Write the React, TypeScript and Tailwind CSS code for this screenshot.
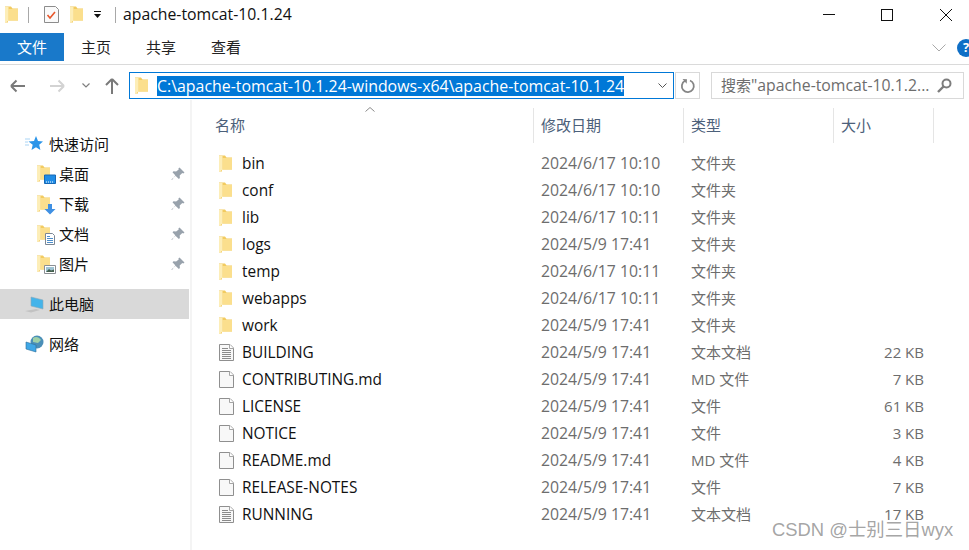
const font = { fontFamily: '"Open Sans", "Noto Sans CJK SC", sans-serif' };

type Item = { name: string; date: string; type: string; size?: string; icon: "folder" | "text" | "file" };

const items: Item[] = [
  { name: "bin", date: "2024/6/17 10:10", type: "文件夹", icon: "folder" },
  { name: "conf", date: "2024/6/17 10:10", type: "文件夹", icon: "folder" },
  { name: "lib", date: "2024/6/17 10:11", type: "文件夹", icon: "folder" },
  { name: "logs", date: "2024/5/9 17:41", type: "文件夹", icon: "folder" },
  { name: "temp", date: "2024/6/17 10:11", type: "文件夹", icon: "folder" },
  { name: "webapps", date: "2024/6/17 10:11", type: "文件夹", icon: "folder" },
  { name: "work", date: "2024/5/9 17:41", type: "文件夹", icon: "folder" },
  { name: "BUILDING", date: "2024/5/9 17:41", type: "文本文档", size: "22 KB", icon: "text" },
  { name: "CONTRIBUTING.md", date: "2024/5/9 17:41", type: "MD 文件", size: "7 KB", icon: "file" },
  { name: "LICENSE", date: "2024/5/9 17:41", type: "文件", size: "61 KB", icon: "file" },
  { name: "NOTICE", date: "2024/5/9 17:41", type: "文件", size: "3 KB", icon: "file" },
  { name: "README.md", date: "2024/5/9 17:41", type: "MD 文件", size: "4 KB", icon: "file" },
  { name: "RELEASE-NOTES", date: "2024/5/9 17:41", type: "文件", size: "7 KB", icon: "file" },
  { name: "RUNNING", date: "2024/5/9 17:41", type: "文本文档", size: "17 KB", icon: "text" },
];

function Folder({ className = "" }: { className?: string }) {
  return (
    <svg viewBox="0 0 13 17" className={`h-[17px] w-[13px] shrink-0 ${className}`}>
      <path d="M0 0.5h6l1.5 2H13v12H3v2H0z" fill="#f2cb60" />
      <path d="M3.5 3H13v11.5H3.5z" fill="#fbdf8d" />
      <path d="M0 1h3.5v13.5L1 16.5H0z" fill="#fdeeb8" />
    </svg>
  );
}

function FileIcon({ lines }: { lines?: boolean }) {
  return (
    <svg viewBox="0 0 15 17" className="h-[17px] w-[15px] shrink-0">
      <path d="M0.5 0.5h10.5l3.5 3.5v12.5h-14z" fill="#f8f8f8" stroke="#8f8f8f" />
      <path d="M10.5 0.5v4h4" fill="#fff" stroke="#a5a5a5" />
      {lines && <path d="M3 4.5h6M3 6.5h9M3 8.5h9M3 10.5h9M3 12.5h9M3 14.5h9" stroke="#8a8a8a" />}
    </svg>
  );
}

function Pin() {
  return (
    <svg viewBox="0 0 14 14" className="h-[14px] w-[14px]">
      <path d="M8.5 0.5l5 5-1.2 1-1-.4-2.6 2.4.2 2.6-1 1L4.2 8.4 1 13l-.6-.6 4.3-3.6-3.2-3.5 1-1 2.6.2L7.7 2.500l-.3-1z" fill="#98a2ac" />
    </svg>
  );
}

function NavRow({ label, icon, indent, active, pin }: { label: string; icon: React.ReactNode; indent?: boolean; active?: boolean; pin?: boolean }) {
  return (
    <div className={`flex h-[30px] w-[189px] items-center ${indent ? "pl-[37px]" : "pl-[25px]"} ${active ? "bg-[#d9d9d9]" : ""}`}>
      <div className={`flex h-[20px] shrink-0 items-center ${indent ? "w-[22px]" : "w-[24px]"}`}>{icon}</div>
      <span className="flex-1 text-[15px] leading-none text-[#111]">{label}</span>
      {pin && <span className="mr-[4px] flex"><Pin /></span>}
    </div>
  );
}

function SideFolder({ badge }: { badge: "desktop" | "down" | "doc" | "pic" }) {
  return (
    <div className="relative h-[18px] w-[18px]">
      <Folder />
      <svg viewBox="0 0 12 12" className="absolute bottom-[-2px] right-[-1px] h-[12px] w-[12px]">
        {badge === "desktop" && (
          <>
            <path d="M0.500 2h11v8.500h-11z" fill="#1f8ce6" stroke="#1668b5" />
            <path d="M2 9h8" stroke="#fff" strokeDasharray="1 1" />
          </>
        )}
        {badge === "down" && <path d="M4 1h4v5h3.500L6 11.500 0.500 6H4z" fill="#3f90e3" />}
        {badge === "doc" && (
          <>
            <path d="M1.500 0.500h7l2 2v9h-9z" fill="#fff" stroke="#7c8794" />
            <path d="M3 3.500h3M3 5.500h6M3 7.500h6M3 9.500h6" stroke="#4d8ecb" />
          </>
        )}
        {badge === "pic" && (
          <>
            <path d="M0.500 2.500h11v8h-11z" fill="#fff" stroke="#8b8f94" />
            <path d="M2 4h8v5H2z" fill="#9fc4d4" />
            <path d="M2 9l3-3 2 1.500L10 6.500V9z" fill="#44604e" />
          </>
        )}
      </svg>
    </div>
  );
}

export default function App() {
  return (
    <div className="relative flex h-[550px] w-[969px] flex-col overflow-hidden bg-white" style={font}>
      {/* title bar */}
      <div className="flex h-[33px] shrink-0 items-center pb-[4px] pl-[5px]">
        <Folder />
        <div className="ml-[10px] h-[16px] w-px bg-[#a8a8a8]" />
        <svg viewBox="0 0 15 17" className="ml-[15px] h-[17px] w-[15px]">
          <path d="M0.500 0.500h11l3 3v13h-14z" fill="#fafafa" stroke="#8c8c8c" />
          <path d="M3.500 9l2.500 3 5-6" fill="none" stroke="#e8562a" strokeWidth="1.600" />
        </svg>
        <Folder className="ml-[11px]" />
        <svg viewBox="0 0 7 7" className="ml-[11px] h-[7px] w-[7px]">
          <path d="M0 0h7v1H0zM0 3h7L3.500 7z" fill="#111" />
        </svg>
        <div className="ml-[14px] h-[16px] w-px bg-[#a8a8a8]" />
        <span className="ml-[7px] text-[15.8px] leading-none text-[#111]">apache-tomcat-10.1.24</span>
        <div className="ml-auto mr-[-6px] flex">
          <div className="flex h-[28px] w-[58px] items-center justify-center pr-[2px]">
            <div className="h-px w-[12px] bg-[#111]" />
          </div>
          <div className="flex h-[28px] w-[58px] items-center justify-center pr-[2px]">
            <div className="h-[12px] w-[12px] border border-[#111]" />
          </div>
          <div className="flex h-[28px] w-[58px] items-center justify-center">
            <svg viewBox="0 0 12 12" className="h-[12px] w-[12px]">
              <path d="M0 0l12 12M12 0L0 12" stroke="#111" />
            </svg>
          </div>
        </div>
      </div>

      {/* ribbon tabs */}
      <div className="flex h-[32px] shrink-0 items-stretch border-b border-b-[#dadada]">
        <div className="flex h-[28px] w-[64px] items-center justify-center bg-[#1979ca] text-[15px] text-white">文件</div>
        <div className="flex h-[28px] items-center pl-[17px] text-[15px] text-[#222]">主页</div>
        <div className="flex h-[28px] items-center pl-[35px] text-[15px] text-[#222]">共享</div>
        <div className="flex h-[28px] items-center pl-[35px] text-[15px] text-[#222]">查看</div>
        <div className="ml-auto flex h-[28px] items-center">
          <svg viewBox="0 0 14 8" className="mr-[11px] mt-[1px] h-[8px] w-[14px]">
            <path d="M0.500 0.500L7 7l6.500-6.500" fill="none" stroke="#a9a9a9" />
          </svg>
          <div className="mr-[-6px] mt-[1px] flex h-[18px] w-[18px] items-center justify-center rounded-full bg-[#0f6fc6] text-[13px] font-bold text-white">?</div>
        </div>
      </div>

      {/* address bar */}
      <div className="flex h-[35px] shrink-0 items-center pb-[1px] pt-[7px]">
        <svg viewBox="0 0 16 14" className="ml-[10px] h-[14px] w-[16px]">
          <path d="M1 7h14M1 7l5.500-5.500M1 7l5.500 5.500" fill="none" stroke="#7a7a7a" strokeWidth="2" />
        </svg>
        <svg viewBox="0 0 16 14" className="ml-[23px] h-[14px] w-[16px]">
          <path d="M15 7H1M15 7L9.500 1.500M15 7l-5.500 5.500" fill="none" stroke="#d3d3d3" strokeWidth="2" />
        </svg>
        <svg viewBox="0 0 8 5" className="ml-[17px] h-[5px] w-[8px]">
          <path d="M0.500 0.500L4 4l3.500-3.500" fill="none" stroke="#7f7f7f" strokeWidth="1.200" />
        </svg>
        <svg viewBox="0 0 14 16" className="ml-[15px] h-[16px] w-[14px]">
          <path d="M7 16V1M7 1L1 7M7 1l6 6" fill="none" stroke="#7a7a7a" strokeWidth="2" />
        </svg>
        <div className="ml-[10px] flex h-[27px] w-[545px] items-center border border-[#0078d7] pl-[5px]">
          <Folder />
          <span className="ml-[9px] bg-[#0078d7] text-[15.9px] leading-[20px] whitespace-nowrap text-white">C:\apache-tomcat-10.1.24-windows-x64\apache-tomcat-10.1.24</span>
          <svg viewBox="0 0 9 5" className="ml-auto mr-[6px] h-[5px] w-[9px]">
            <path d="M0.500 0.500L4.500 4.500l4-4" fill="none" stroke="#555" />
          </svg>
        </div>
        <div className="ml-px flex h-[27px] w-[25px] items-center justify-center border border-[#d9d9d9]">
          <svg viewBox="0 0 16 16" className="h-[16px] w-[16px]">
            <path d="M10 2.500a6 6 0 1 1-5 .3" fill="none" stroke="#858585" strokeWidth="1.800" />
            <path d="M2.500 1l4.500.3-.3 4.500z" fill="#858585" />
          </svg>
        </div>
        <div className="ml-[11px] flex h-[27px] w-[253px] items-center border border-[#d9d9d9] pl-[9px]">
          <span className="text-[15px] leading-none whitespace-nowrap text-[#6d6d6d]">
            搜索<span className="text-[15.8px]">"apache-tomcat-10.1.2...</span>
          </span>
          <svg viewBox="0 0 15 15" className="ml-auto mr-[11px] h-[15px] w-[15px]">
            <circle cx="9.500" cy="5.500" r="4" fill="none" stroke="#7d7d7d" strokeWidth="2" />
            <path d="M6.500 8.500L1 14" stroke="#7d7d7d" strokeWidth="2.400" />
          </svg>
        </div>
      </div>

      <div className="flex min-h-0 flex-1">
        {/* sidebar */}
        <div className="flex w-[192px] shrink-0 flex-col border-r-2 border-r-[#f4f4f4] pt-[29px]">
          <NavRow
            label="快速访问"
            icon={
              <svg viewBox="0 0 18 16" className="h-[16px] w-[18px]">
                <path d="M0 3h5M0 6h3M0 9h4" stroke="#a9d4f5" />
                <path d="M11 0l2 5 5 .4-3.800 3.300 1.200 5.300-4.400-2.800L6.500 14l1.200-5.300L3.500 5.400 9 5z" fill="#2b95e9" />
              </svg>
            }
          />
          <NavRow indent pin label="桌面" icon={<SideFolder badge="desktop" />} />
          <NavRow indent pin label="下载" icon={<SideFolder badge="down" />} />
          <NavRow indent pin label="文档" icon={<SideFolder badge="doc" />} />
          <NavRow indent pin label="图片" icon={<SideFolder badge="pic" />} />
          <div className="h-[10px]" />
          <NavRow
            active
            label="此电脑"
            icon={
              <svg viewBox="0 0 20 18" className="h-[18px] w-[20px] -translate-x-[1px]">
                <path d="M7 2l12 3v9L7 11z" fill="#45b4ea" stroke="#8fa9b8" strokeWidth="0.600" />
                <path d="M1 16l11-2 4 1-9 2.500z" fill="#c2c2c2" />
              </svg>
            }
          />
          <div className="h-[10px]" />
          <NavRow
            label="网络"
            icon={
              <svg viewBox="0 0 19 18" className="h-[18px] w-[19px]">
                <circle cx="12" cy="7" r="6.500" fill="#4b8fb8" />
                <path d="M8 3c3-2 6-1 8 2l-3 3-5-1z" fill="#9ed0a8" />
                <path d="M1 7l10 3v7L1 14z" fill="#3fa7e6" stroke="#2b6d99" strokeWidth="0.600" />
              </svg>
            }
          />
        </div>

        {/* file list */}
        <div className="flex-1">
          <div className="relative mt-[8px] grid h-[35px] grid-cols-[341px_150px_150px_101px] text-[15px] text-[#4c607a]">
            <svg viewBox="0 0 10 5" className="absolute left-[173px] top-[-1px] h-[5px] w-[10px]">
              <path d="M0.500 4.500L5 0.500l4.500 4" fill="none" stroke="#8a8a8a" />
            </svg>
            <div className="flex items-center pl-[23px]">名称</div>
            <div className="flex items-center border-l border-l-[#e5e5e5] pl-[7px]">修改日期</div>
            <div className="flex items-center border-l border-l-[#e5e5e5] pl-[7px]">类型</div>
            <div className="flex items-center border-x border-x-[#e5e5e5] pl-[7px]">大小</div>
          </div>
          <div className="mt-[7px]">
            {items.map((item) => (
              <div key={item.name} className="grid h-[27px] grid-cols-[341px_150px_150px_101px] items-center text-[15px] leading-none">
                <div className="flex items-center pl-[27px] text-[15.4px] text-[#111]">
                  {item.icon === "folder" ? <Folder className="mr-[10px]" /> : <FileIcon lines={item.icon === "text"} />}
                  <span className={item.icon === "folder" ? "" : "ml-[8px]"}>{item.name}</span>
                </div>
                <div className="pl-[8px] text-[15.8px] text-[#6d6d6d]">{item.date}</div>
                <div className="pl-[8px] text-[#6d6d6d]">{item.type}</div>
                <div className="pr-[10px] text-right text-[#6d6d6d]">{item.size}</div>
              </div>
            ))}
          </div>
        </div>
      </div>

      {/* watermark */}
      <div className="absolute left-[772px] top-[518px] text-[18.4px] leading-[24px] text-[#9a9a9a]/90" style={{ fontFamily: '"Liberation Sans", "Noto Sans CJK SC", sans-serif' }}>
        CSDN @士别三日wyx
      </div>
    </div>
  );
}
